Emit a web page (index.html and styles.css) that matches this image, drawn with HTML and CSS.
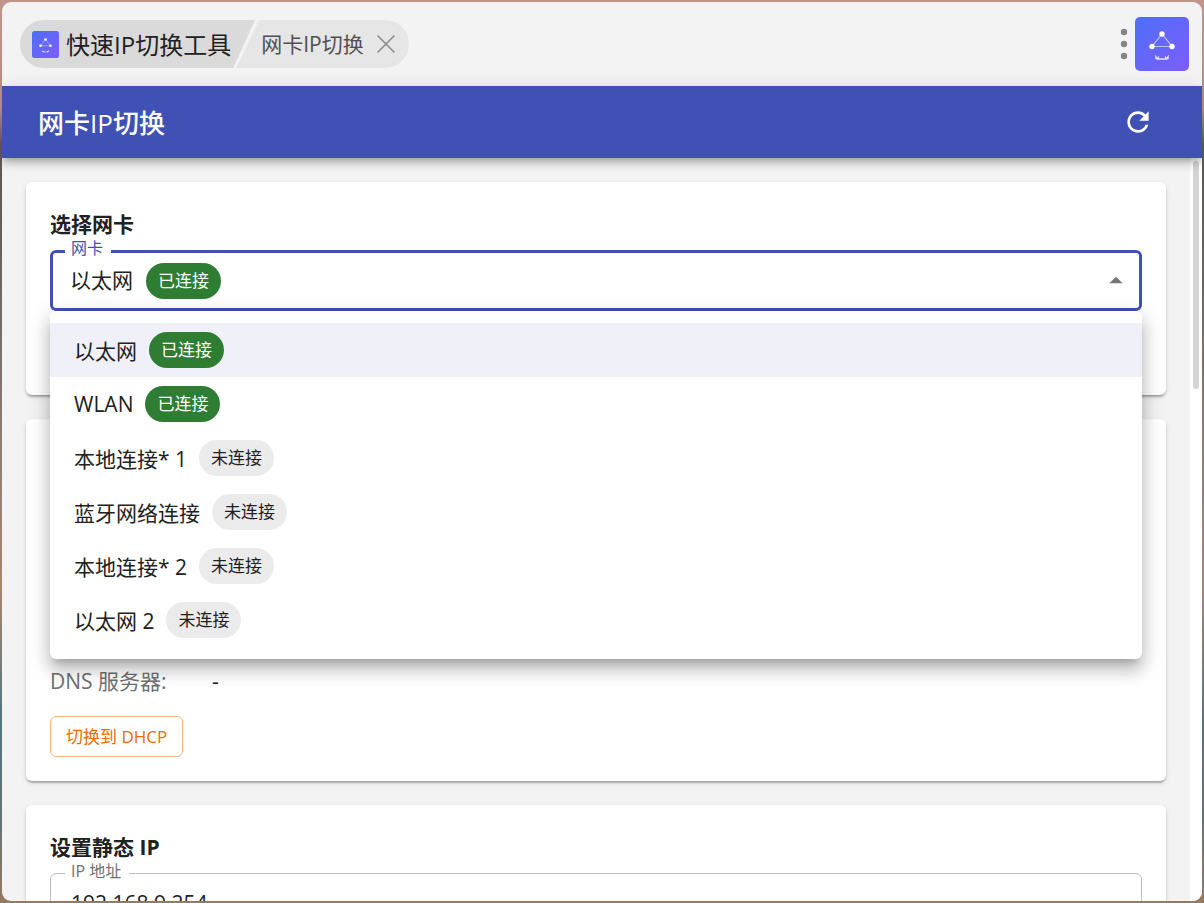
FILE: index.html
```html
<!DOCTYPE html>
<html lang="zh-CN">
  <head>
    <meta charset="UTF-8">
    <title>快速IP切换工具</title>
    <link rel="stylesheet" href="styles.css">
  </head>
  <body>
    <svg width="0" height="0" class="defs" aria-hidden="true">
      <defs>
        <linearGradient id="logo-bg" x1="0" y1="0" x2="1" y2="1">
          <stop offset="0" stop-color="#4d6ff6"/>
          <stop offset="1" stop-color="#7e5cff"/>
        </linearGradient>
      </defs>
      <symbol id="logo" viewBox="0 0 54 54">
        <rect width="54" height="54" rx="5" fill="url(#logo-bg)"/>
        <path d="M27 17 L17 29.500 H37 Z" fill="none" stroke="#fff" stroke-opacity=".6" stroke-width="1.200"/>
        <circle cx="27" cy="17" r="2.700" fill="#fff"/>
        <circle cx="17" cy="29.500" r="2.700" fill="#fff"/>
        <circle cx="37" cy="29.500" r="2.700" fill="#fff"/>
        <path d="M20.300 38.500 L22.500 42 H31.500 L33.700 38.500 M20.300 41 L22.500 42 L23.800 39.500 M30.200 39.500 L31.500 42 L33.700 41" fill="none" stroke="#fff" stroke-opacity=".8" stroke-width="1.400"/>
      </symbol>
    </svg>

    <div class="window">
      <header class="titlebar">
        <div class="tabs">
          <div class="tab tab-app">
            <svg class="logo-small" aria-hidden="true"><use href="#logo"/></svg>
            <span>快速IP切换工具</span>
          </div>
          <div class="tab tab-page">
            <span>网卡IP切换</span>
            <button type="button" class="close" aria-label="关闭">
              <svg width="20" height="20" viewBox="0 0 20 20"><path d="M1.500 1.500 L18.500 18.500 M18.500 1.500 L1.500 18.500" stroke="#8c8c8c" stroke-width="1.600"/></svg>
            </button>
          </div>
        </div>
        <div class="tools">
          <button type="button" class="more" aria-label="更多">
            <svg width="8" height="32" viewBox="0 0 8 32" fill="#868686"><circle cx="4" cy="4" r="3.200"/><circle cx="4" cy="16" r="3.200"/><circle cx="4" cy="28" r="3.200"/></svg>
          </button>
          <svg class="logo" aria-hidden="true"><use href="#logo"/></svg>
        </div>
      </header>

      <div class="appbar">
        <h1>网卡IP切换</h1>
        <button type="button" class="refresh" aria-label="刷新">
          <svg width="32" height="32" viewBox="0 0 24 24" fill="#fff"><path d="M17.650 6.350C16.200 4.900 14.210 4 12 4c-4.420 0-7.990 3.580-7.990 8s3.570 8 7.990 8c3.730 0 6.840-2.550 7.730-6h-2.080c-.820 2.330-3.040 4-5.650 4-3.310 0-6-2.690-6-6s2.690-6 6-6c1.660 0 3.140.690 4.220 1.780L13 11h7V4l-2.350 2.350z"/></svg>
        </button>
      </div>

      <div class="body">
        <main class="content">
          <section class="card card-select">
            <h2>选择网卡</h2>
            <div class="field field-open">
              <label for="adapter">网卡</label>
              <select id="adapter">
                <option>以太网</option>
              </select>
              <span class="chip chip-on chip-value">已连接</span>
              <svg class="arrow" width="32" height="32" viewBox="0 0 24 24" fill="#757575" aria-hidden="true"><path d="M7 14.500l5-5 5 5z"/></svg>
              <ul class="menu" role="listbox" aria-label="网卡">
                <li class="selected" role="option" aria-selected="true">以太网<span class="chip chip-on">已连接</span></li>
                <li role="option">WLAN<span class="chip chip-on">已连接</span></li>
                <li role="option">本地连接* 1<span class="chip">未连接</span></li>
                <li role="option">蓝牙网络连接<span class="chip">未连接</span></li>
                <li role="option">本地连接* 2<span class="chip">未连接</span></li>
                <li role="option">以太网 2<span class="chip">未连接</span></li>
              </ul>
            </div>
          </section>

          <section class="card card-info">
            <dl class="info">
              <dt>DNS 服务器:</dt>
              <dd>-</dd>
            </dl>
            <button type="button" class="dhcp">切换到 DHCP</button>
          </section>

          <section class="card">
            <h2>设置静态 IP</h2>
            <div class="field">
              <label for="ip">IP 地址</label>
              <input type="text" id="ip" value="192.168.9.254">
            </div>
          </section>
        </main>
        <div class="scrollbar"><div class="thumb"></div></div>
      </div>
    </div>
  </body>
</html>
```

FILE: styles.css
```css
:root {
  --primary: #3f51b5;
  --success: #2e7d32;
  --warning: #ed6c02;
  --text: #212121;
  --muted: #707070;
}

* {
  box-sizing: border-box;
}

body {
  margin: 0;
  padding: 2px;
  height: 100vh;
  overflow: hidden;
  font-family: "Open Sans", "Noto Sans CJK SC", sans-serif;
  font-size: 21px;
  color: var(--text);
  /* desktop wallpaper behind the window */
  background: linear-gradient(#c0958a 0, #b48a80 12%, #5c5350 16%, #6c6560 30%, #8c8078 50%, #a88674 65%, #54747c 80%, #6a7474 92%, #967a60 100%);
}

button {
  font: inherit;
  cursor: pointer;
}

.defs {
  position: absolute;
}

.window {
  display: flex;
  flex-direction: column;
  height: 100%;
  overflow: hidden;
  border-radius: 9px;
  background: #f3f3f3;
}

/* title bar */
.titlebar {
  display: flex;
  flex: none;
  align-items: center;
  justify-content: space-between;
  height: 84px;
  padding: 0 13px 0 18px;
}

.tabs {
  display: flex;
  height: 48px;
  overflow: hidden;
  border-radius: 24px;
}

.tab {
  display: flex;
  align-items: center;
  white-space: nowrap;
}

.tab span {
  padding-bottom: 2px;
}

.tab-app {
  gap: 7px;
  padding: 0 24px 0 12px;
  background: #dadada;
  font-size: 24px;
  clip-path: polygon(0 0, 100% 0, calc(100% - 22px) 100%, 0 100%);
}

.tab-page {
  gap: 12px;
  margin-left: -19px;
  padding: 0 13px 0 25px;
  background: #e6e6e6;
  color: #505050;
  clip-path: polygon(23px 0, 100% 0, 100% 100%, 0 100%);
}

.logo-small {
  width: 27px;
  height: 27px;
}

.logo {
  width: 54px;
  height: 54px;
}

.close,
.more,
.refresh {
  display: flex;
  padding: 0;
  border: none;
  background: none;
}

.tools {
  display: flex;
  align-items: center;
  gap: 7px;
}

/* app bar */
.appbar {
  position: relative;
  z-index: 1;
  display: flex;
  flex: none;
  align-items: center;
  justify-content: space-between;
  height: 72px;
  padding: 0 48px 0 36px;
  background: var(--primary);
  color: #fff;
  box-shadow: 0 3px 6px -2px rgba(0, 0, 0, 0.2), 0 6px 8px rgba(0, 0, 0, 0.14), 0 2px 15px rgba(0, 0, 0, 0.12);
}

.appbar h1 {
  margin: 0;
  font-size: 26px;
  font-weight: 500;
}

.body {
  display: flex;
  flex: 1;
  min-height: 0;
}

.content {
  display: flex;
  flex: 1;
  flex-direction: column;
  gap: 24px;
  padding: 24px;
  overflow: hidden;
}

.scrollbar {
  width: 12px;
  padding: 3px;
  background: #fff;
}

.thumb {
  height: 31%;
  border-radius: 3px;
  background: #d4d4d4;
}

/* cards */
.card {
  flex: none;
  padding: 24px;
  border-radius: 6px;
  background: #fff;
  box-shadow: 0 3px 2px -2px rgba(0, 0, 0, 0.2), 0 2px 2px rgba(0, 0, 0, 0.14), 0 2px 5px rgba(0, 0, 0, 0.12);
}

.card h2 {
  margin: 0 0 8px;
  font-size: 21px;
  font-weight: 700;
  line-height: 36px;
}

.card-select {
  min-height: 213px;
}

.card-info {
  display: flex;
  flex-direction: column;
  align-items: flex-start;
  justify-content: flex-end;
  min-height: 362px;
}

/* fields */
.field {
  position: relative;
}

.field label {
  position: absolute;
  top: -13px;
  left: 15px;
  padding: 0 8px 0 6px;
  background: #fff;
  color: var(--muted);
  font-size: 16px;
  line-height: 22px;
}

.field input,
.field select {
  display: block;
  width: 100%;
  height: 61px;
  padding: 0 20px 2px;
  border: 1px solid #bdbdbd;
  border-radius: 6px;
  background: #fff;
  color: var(--text);
  font: inherit;
  appearance: none;
}

.field-open label {
  color: var(--primary);
}

.field-open select {
  padding: 0 17px 2px;
  border: 3px solid var(--primary);
}

.arrow {
  position: absolute;
  top: 14px;
  right: 10px;
}

.chip {
  height: 36px;
  padding: 0 12px;
  border-radius: 18px;
  background: #ebebeb;
  font-size: 17px;
  line-height: 36px;
}

.chip-on {
  background: var(--success);
  color: #fff;
}

.chip-value {
  position: absolute;
  top: 13px;
  left: 96px;
}

.menu {
  position: absolute;
  z-index: 2;
  top: 100%;
  left: 0;
  right: 0;
  margin: 0;
  padding: 12px 0;
  list-style: none;
  border-radius: 6px;
  background: #fff;
  box-shadow: 0 8px 8px -5px rgba(0, 0, 0, 0.2), 0 12px 15px 2px rgba(0, 0, 0, 0.14), 0 5px 21px 3px rgba(0, 0, 0, 0.12);
}

.menu li {
  display: flex;
  align-items: center;
  gap: 12px;
  height: 54px;
  padding: 0 24px;
}

.menu .selected {
  background: #f0f0f9;
}

/* current settings */
.info {
  display: flex;
  margin: 0 0 19px;
  line-height: 32px;
}

.info dt {
  width: 162px;
  color: var(--muted);
}

.info dd {
  margin: 0;
}

.dhcp {
  height: 41px;
  padding: 0 15px 2px;
  border: 1px solid #f6b580;
  border-radius: 6px;
  background: #fff;
  color: var(--warning);
  font-size: 17px;
}
```
